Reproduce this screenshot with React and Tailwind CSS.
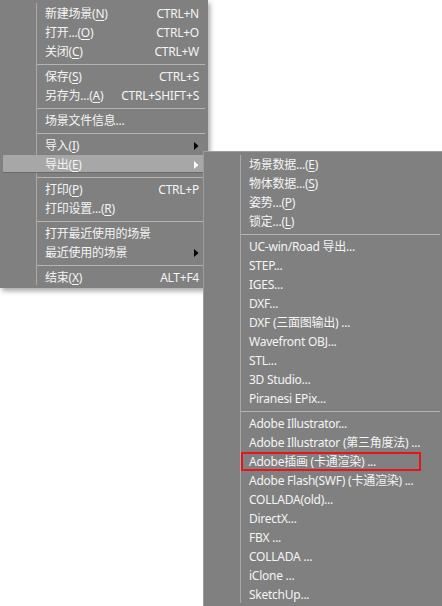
import React from "react";

const FONT = { fontFamily: '"Segoe UI", "Noto Sans", "Noto Sans CJK SC", sans-serif' };

function Label({ text, m, tail }) {
  return (
    <span className="whitespace-nowrap">
      {text}
      {m !== undefined && (
        <>
          (<span className="underline underline-offset-2">{m}</span>){tail || ""}
        </>
      )}
    </span>
  );
}

function Arrow({ white }) {
  return (
    <svg width="5" height="8" viewBox="0 0 5 8" className="shrink-0">
      <path d="M0 0 L4.5 4 L0 8 Z" fill={white ? "#ffffff" : "#000000"} />
    </svg>
  );
}

function MainRow({ children, shortcut, arrow, active }) {
  return (
    <div className="relative flex h-[19px] items-center">
      {active && (
        <div className="absolute left-[3px] right-[4px] top-0 h-[18px] bg-[#a7a7a7] border-b border-r border-[#6a6a6a]" />
      )}
      <div className="w-[36px] shrink-0" />
      <div className="relative flex flex-1 items-center pl-[9px] pr-[9px]">
        <div className="flex-1">{children}</div>
        {shortcut && <span className="whitespace-nowrap">{shortcut}</span>}
        {arrow && <Arrow white={active} />}
      </div>
    </div>
  );
}

function MainSep() {
  return (
    <div className="flex h-[6px] items-center">
      <div className="w-[37px] shrink-0" />
      <div className="h-px flex-1 mr-[3px] bg-[#b4b4b4]" />
    </div>
  );
}

function SubRow({ children, boxed }) {
  return (
    <div className="flex h-[19px] items-center">
      {boxed ? (
        <div className="ml-[37px] flex h-[19px] w-[180px] items-center border-2 border-[#e8141a] pl-[6px] whitespace-nowrap">
          {children}
        </div>
      ) : (
        <div className="pl-[45px] whitespace-nowrap">{children}</div>
      )}
    </div>
  );
}

function SubSep() {
  return (
    <div className="flex h-[6px] items-center">
      <div className="w-[37px] shrink-0" />
      <div className="h-px flex-1 mr-[2px] bg-[#b4b4b4]" />
    </div>
  );
}

export default function App() {
  return (
    <div
      className="relative h-[606px] w-[442px] overflow-hidden bg-white text-[12px] leading-none tracking-[-0.25px] text-[#f4f4f4]"
      style={FONT}
    >
      {/* Main menu */}
      <div className="absolute left-0 top-0 h-[288px] w-[208px] bg-[#808080] pt-[4px] shadow-[2px_3px_5px_rgba(0,0,0,0.35)]">
        <div className="absolute left-[36px] top-[3px] bottom-[3px] w-px bg-[#a8a8a8]" />
        <MainRow shortcut="CTRL+N"><Label text="新建场景" m="N" /></MainRow>
        <MainRow shortcut="CTRL+O"><Label text="打开..." m="O" /></MainRow>
        <MainRow shortcut="CTRL+W"><Label text="关闭" m="C" /></MainRow>
        <MainSep />
        <MainRow shortcut="CTRL+S"><Label text="保存" m="S" /></MainRow>
        <MainRow shortcut="CTRL+SHIFT+S"><Label text="另存为..." m="A" /></MainRow>
        <MainSep />
        <MainRow><Label text="场景文件信息..." /></MainRow>
        <MainSep />
        <MainRow arrow><Label text="导入" m="I" /></MainRow>
        <MainRow arrow active><Label text="导出" m="E" /></MainRow>
        <MainSep />
        <MainRow shortcut="CTRL+P"><Label text="打印" m="P" /></MainRow>
        <MainRow><Label text="打印设置..." m="R" /></MainRow>
        <MainSep />
        <MainRow><Label text="打开最近使用的场景" /></MainRow>
        <MainRow arrow><Label text="最近使用的场景" /></MainRow>
        <MainSep />
        <MainRow shortcut="ALT+F4"><Label text="结束" m="X" /></MainRow>
      </div>

      {/* Export submenu */}
      <div className="absolute left-[203px] top-[151px] h-[455px] w-[239px] border-l border-t border-[#9c9c9c] bg-[#808080] pt-[3px]">
        <div className="absolute left-[36px] top-[3px] bottom-[3px] w-px bg-[#a8a8a8]" />
        <SubRow><Label text="场景数据..." m="E" /></SubRow>
        <SubRow><Label text="物体数据..." m="S" /></SubRow>
        <SubRow><Label text="姿势..." m="P" /></SubRow>
        <SubRow><Label text="锁定..." m="L" /></SubRow>
        <SubSep />
        <SubRow>UC-win/Road 导出...</SubRow>
        <SubRow>STEP...</SubRow>
        <SubRow>IGES...</SubRow>
        <SubRow>DXF...</SubRow>
        <SubRow>DXF (三面图输出) ...</SubRow>
        <SubRow>Wavefront OBJ...</SubRow>
        <SubRow>STL...</SubRow>
        <SubRow>3D Studio...</SubRow>
        <SubRow>Piranesi EPix...</SubRow>
        <SubSep />
        <SubRow>Adobe Illustrator...</SubRow>
        <SubRow>Adobe Illustrator (第三角度法) ...</SubRow>
        <SubRow boxed>Adobe插画 (卡通渲染) ...</SubRow>
        <SubRow>Adobe Flash(SWF) (卡通渲染) ...</SubRow>
        <SubRow>COLLADA(old)...</SubRow>
        <SubRow>DirectX...</SubRow>
        <SubRow>FBX ...</SubRow>
        <SubRow>COLLADA ...</SubRow>
        <SubRow>iClone ...</SubRow>
        <SubRow>SketchUp...</SubRow>
      </div>
    </div>
  );
}
